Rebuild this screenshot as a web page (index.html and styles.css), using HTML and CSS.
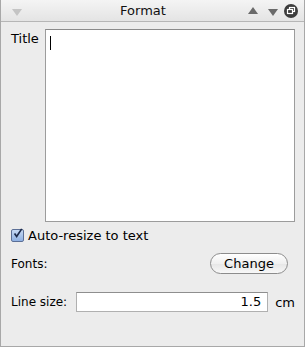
FILE: index.html
```html
<!DOCTYPE html>
<html lang="en">
<head>
    <meta charset="UTF-8">
    <title>Format</title>
    <link rel="stylesheet" href="styles.css">
</head>
<body>
    <div class="panel">
        <div class="titlebar">
            <span class="tri tri-down dim"></span>
            <div class="title">Format</div>
            <span class="tri tri-up"></span>
            <span class="tri tri-down"></span>
            <span class="close-btn">
                <svg width="14" height="14" viewBox="0 0 14 14">
                    <circle cx="7" cy="7" r="7" fill="#3c3c3c"/>
                    <rect x="5.5" y="3.5" width="5" height="4" fill="none" stroke="#fff" stroke-width="1.2"/>
                    <rect x="3.5" y="5.5" width="5" height="4" fill="#3c3c3c" stroke="#fff" stroke-width="1.2"/>
                </svg>
            </span>
        </div>

        <div class="content">
            <div class="title-row">
                <label class="label">Title</label>
                <div class="textarea"><span class="caret"></span></div>
            </div>

            <div class="check-row">
                <span class="checkbox">
                    <svg width="13" height="13" viewBox="0 0 13 13">
                        <path d="M3 6.5 L5.5 10 L11.5 1" fill="none" stroke="#1c2a4a" stroke-width="2"/>
                    </svg>
                </span>
                <span>Auto-resize to text</span>
            </div>

            <div class="fonts-row">
                <span class="label">Fonts:</span>
                <button class="change-btn">Change</button>
            </div>

            <div class="size-row">
                <span class="label">Line size:</span>
                <div class="num-field">1.5</div>
                <span class="unit">cm</span>
            </div>
        </div>
    </div>
</body>
</html>
```

FILE: styles.css
```css
body {
    margin: 0;
    font-family: "DejaVu Sans", sans-serif;
    font-size: 12px;
    color: #000;
    background: #fff;
}

.panel {
    width: 303px;
    height: 346px;
    background-color: #ececec;
    border: 1px solid #a8a8a8;
    border-top: none;
}

.titlebar {
    height: 21px;
    display: flex;
    align-items: center;
    padding: 0 6px 0 11px;
    background: linear-gradient(#f4f4f4, #e4e4e4);
    border-bottom: 1px solid #b6b6b6;
    font-size: 13px;
}

.title {
    flex: 1;
    text-align: center;
    padding-left: 16px;
    color: #111;
}

.tri {
    width: 0;
    height: 0;
    border-left: 5px solid transparent;
    border-right: 5px solid transparent;
}

.tri-down {
    border-top: 7px solid #6a6a6a;
    margin-top: 3px;
}

.tri-up {
    border-bottom: 7px solid #6a6a6a;
    margin-right: 10px;
}

.tri-down.dim {
    border-top-color: #c4c4c4;
}

.close-btn {
    display: flex;
    margin-left: 6px;
}

.content {
    padding: 7px 9px 0 10px;
}

.title-row {
    display: flex;
}

.label {
    line-height: 20px;
    white-space: nowrap;
}

.title-row .label {
    width: 34px;
    font-size: 13px;
}

.textarea {
    background: #fff;
    border: 1px solid #9c9c9c;
    border-top-color: #8a8a8a;
    padding: 6px 0 0 4px;
    box-sizing: border-box;
    height: 193px;
    width: 251px;
}

.caret {
    display: block;
    width: 1px;
    height: 14px;
    background: #000;
}

.check-row {
    display: flex;
    align-items: center;
    gap: 4px;
    margin-top: 6px;
    font-size: 13px;
}

.checkbox {
    width: 13px;
    height: 13px;
    border: 1px solid #5b6f96;
    border-radius: 2px;
    background: linear-gradient(#c6d9f3, #8fb1e3);
    box-sizing: border-box;
    display: flex;
}

.checkbox svg {
    margin: -3px 0 0 0;
}

.fonts-row {
    display: flex;
    justify-content: space-between;
    align-items: center;
    margin-top: 10px;
    padding-right: 7px;
}

.change-btn {
    width: 78px;
    height: 21px;
    border: 1px solid #8c8c8c;
    border-radius: 11px;
    background: linear-gradient(#ffffff, #f0f0f0 50%, #e6e6e6 51%, #f8f8f8);
    font-family: "DejaVu Sans", sans-serif;
    font-size: 13px;
    padding: 0;
    color: #000;
}

.size-row {
    display: flex;
    align-items: center;
    margin-top: 18px;
}

.size-row .label {
    width: 66px;
}

.num-field {
    width: 194px;
    height: 20px;
    background: #fff;
    border: 1px solid #b0b0b0;
    border-top-color: #8e8e8e;
    box-sizing: border-box;
    text-align: right;
    padding-right: 6px;
    line-height: 18px;
    font-size: 13px;
}

.unit {
    margin-left: 7px;
    font-size: 13px;
}
```
